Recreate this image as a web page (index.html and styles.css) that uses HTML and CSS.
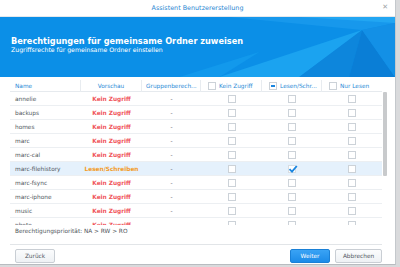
FILE: index.html
```html
<!DOCTYPE html>
<html>
<head>
  <title>Assistent Benutzererstellung</title>
  <link rel="stylesheet" href="styles.css">
</head>

<body>
  <div class="window">
    <div class="titlebar">
      <span class="title">Assistent Benutzererstellung</span>
      <span class="close">&#x2715;</span>
    </div>

    <div class="banner">
      <svg class="banner-art" viewBox="0 0 396 60" preserveAspectRatio="none">
        <rect width="396" height="60" fill="#0b8fe7"/>
        <polygon points="230,0 396,0 396,6 363,13" fill="#1798ec"/>
        <polygon points="300,0 396,0 396,6" fill="#22a6f2"/>
        <polygon points="363,13 220,60 300,60" fill="#1ba3f0"/>
        <polygon points="363,13 300,60 350,60" fill="#0d86dc"/>
        <polygon points="363,13 350,60 396,60" fill="#0a7ed6"/>
        <polygon points="363,13 396,6 396,60" fill="#1390e6"/>
        <polygon points="180,60 260,35 220,60" fill="#1299ec"/>
      </svg>
      <h1 class="banner-title">Berechtigungen für gemeinsame Ordner zuweisen</h1>
      <p class="banner-sub">Zugriffsrechte für gemeinsame Ordner einstellen</p>
    </div>

    <div class="grid-area">
      <div class="grid-head">
        <div class="col col-name">Name</div>
        <div class="col col-preview">Vorschau</div>
        <div class="col col-group">Gruppenberech...</div>
        <div class="col col-perm"><span class="box"></span>Kein Zugriff</div>
        <div class="col col-perm"><span class="box box-mixed"></span>Lesen/Schr...</div>
        <div class="col col-perm last"><span class="box"></span>Nur Lesen</div>
      </div>

      <div class="grid-body">
        <div class="rows">
          <div class="row"><div class="cell col-name">annelie</div><div class="cell col-preview deny">Kein Zugriff</div><div class="cell col-group">-</div><div class="cell col-perm"><span class="box"></span></div><div class="cell col-perm"><span class="box"></span></div><div class="cell col-perm"><span class="box"></span></div></div>
          <div class="row"><div class="cell col-name">backups</div><div class="cell col-preview deny">Kein Zugriff</div><div class="cell col-group">-</div><div class="cell col-perm"><span class="box"></span></div><div class="cell col-perm"><span class="box"></span></div><div class="cell col-perm"><span class="box"></span></div></div>
          <div class="row"><div class="cell col-name">homes</div><div class="cell col-preview deny">Kein Zugriff</div><div class="cell col-group">-</div><div class="cell col-perm"><span class="box"></span></div><div class="cell col-perm"><span class="box"></span></div><div class="cell col-perm"><span class="box"></span></div></div>
          <div class="row"><div class="cell col-name">marc</div><div class="cell col-preview deny">Kein Zugriff</div><div class="cell col-group">-</div><div class="cell col-perm"><span class="box"></span></div><div class="cell col-perm"><span class="box"></span></div><div class="cell col-perm"><span class="box"></span></div></div>
          <div class="row"><div class="cell col-name">marc-cal</div><div class="cell col-preview deny">Kein Zugriff</div><div class="cell col-group">-</div><div class="cell col-perm"><span class="box"></span></div><div class="cell col-perm"><span class="box"></span></div><div class="cell col-perm"><span class="box"></span></div></div>
          <div class="row selected"><div class="cell col-name">marc-filehistory</div><div class="cell col-preview rw">Lesen/Schreiben</div><div class="cell col-group">-</div><div class="cell col-perm"><span class="box"></span></div><div class="cell col-perm"><span class="box box-checked"><svg viewBox="0 0 10 10"><path d="M1.5 5.2 L4 7.6 L8.8 2" fill="none" stroke="#1a86e0" stroke-width="1.8"/></svg></span></div><div class="cell col-perm"><span class="box"></span></div></div>
          <div class="row"><div class="cell col-name">marc-fsync</div><div class="cell col-preview deny">Kein Zugriff</div><div class="cell col-group">-</div><div class="cell col-perm"><span class="box"></span></div><div class="cell col-perm"><span class="box"></span></div><div class="cell col-perm"><span class="box"></span></div></div>
          <div class="row"><div class="cell col-name">marc-iphone</div><div class="cell col-preview deny">Kein Zugriff</div><div class="cell col-group">-</div><div class="cell col-perm"><span class="box"></span></div><div class="cell col-perm"><span class="box"></span></div><div class="cell col-perm"><span class="box"></span></div></div>
          <div class="row"><div class="cell col-name">music</div><div class="cell col-preview deny">Kein Zugriff</div><div class="cell col-group">-</div><div class="cell col-perm"><span class="box"></span></div><div class="cell col-perm"><span class="box"></span></div><div class="cell col-perm"><span class="box"></span></div></div>
          <div class="row hover"><div class="cell col-name">photo</div><div class="cell col-preview deny">Kein Zugriff</div><div class="cell col-group">-</div><div class="cell col-perm"><span class="box"></span></div><div class="cell col-perm"><span class="box"></span></div><div class="cell col-perm"><span class="box"></span></div></div>
        </div>
        <div class="scrollbar"><div class="thumb"></div></div>
      </div>
    </div>

    <p class="priority">Berechtigungspriorität: NA &gt; RW &gt; RO</p>

    <div class="footer">
      <button class="btn">Zurück</button>
      <div class="spacer"></div>
      <button class="btn btn-primary">Weiter</button>
      <button class="btn">Abbrechen</button>
    </div>
  </div>
</body>
</html>
```

FILE: styles.css
```css
body {
  margin: 0;
  background-color: #d9dadc;
  font-family: "DejaVu Sans", Verdana, sans-serif;
  width: 400px;
  height: 267px;
  overflow: hidden;
}

.window {
  width: 396px;
  height: 265px;
  background-color: #fff;
  border-right: 1px solid #c4c8cc;
  border-bottom: 1px solid #b8bcc0;
  box-sizing: border-box;
  display: flex;
  flex-direction: column;
}

.titlebar {
  height: 17px;
  display: flex;
  align-items: center;
  justify-content: center;
  position: relative;
  border-bottom: 1px solid #e4e8ec;
  box-sizing: border-box;
}

.title {
  font-size: 6.4px;
  color: #2a86d2;
}

.close {
  position: absolute;
  right: 7px;
  top: 3px;
  font-size: 7px;
  color: #a0a4a8;
}

.banner {
  height: 60px;
  position: relative;
  padding-left: 11px;
  box-sizing: border-box;
  padding-top: 19px;
  overflow: hidden;
}

.banner-art {
  position: absolute;
  left: 0;
  top: 0;
  width: 100%;
  height: 100%;
}

.banner-title {
  position: relative;
  margin: 0;
  font-size: 8.2px;
  line-height: 10px;
  font-weight: bold;
  color: #fff;
}

.banner-sub {
  position: relative;
  margin: 0;
  font-size: 6.2px;
  line-height: 8px;
  color: #fff;
}

.grid-area {
  margin: 3px 0 0 10px;
}

.grid-head {
  display: flex;
  height: 12px;
  width: 372px;
  align-items: center;
  border-bottom: 1px solid #e6eaee;
  box-sizing: border-box;
  font-size: 5.8px;
  color: #2a8ad6;
}

.grid-head .col {
  height: 12px;
  display: flex;
  align-items: center;
  border-right: 1px solid #e8ecf0;
  box-sizing: border-box;
  white-space: nowrap;
  overflow: hidden;
}

.grid-head .col.last {
  border-right: none;
}

.col-name { width: 71px; padding-left: 5px; }
.col-preview { width: 61px; justify-content: center; }
.col-group { width: 59px; justify-content: center; }
.col-perm { width: 60px; justify-content: center; }

.grid-head .col-group {
  justify-content: flex-start;
  padding-left: 4px;
}

.grid-head .col-perm {
  justify-content: flex-start;
  padding-left: 7px;
  gap: 3px;
}

.grid-head .col-perm:nth-child(4) { width: 61px; }

.grid-body {
  display: flex;
  height: 133px;
  overflow: hidden;
}

.rows {
  width: 372px;
}

.row {
  display: flex;
  height: 14px;
  align-items: center;
  border-bottom: 1px solid #eceff2;
  box-sizing: border-box;
  font-size: 5.8px;
  color: #50565c;
}

.row .col-perm:nth-child(4) { width: 61px; }

.row.selected {
  background-color: #e5f1fc;
}

.cell {
  display: flex;
  align-items: center;
  height: 100%;
  box-sizing: border-box;
  white-space: nowrap;
}

.deny {
  color: #f0555a;
  font-weight: bold;
}

.rw {
  color: #f39a25;
  font-weight: bold;
}

.box {
  display: inline-block;
  width: 8px;
  height: 8px;
  border: 1px solid #ccd2d8;
  background: #fff;
  box-sizing: border-box;
  position: relative;
}

.box-mixed::after {
  content: '';
  position: absolute;
  left: 1px;
  right: 1px;
  top: 2.5px;
  height: 2px;
  background: #1a86e0;
}

.box-checked {
  border-color: #d8dde2;
}

.box-checked svg {
  position: absolute;
  left: -1px;
  top: -2px;
  width: 10px;
  height: 10px;
}

.scrollbar {
  width: 4px;
  margin-left: 1px;
  height: 133px;
}

.thumb {
  height: 84px;
  background: #c8cacc;
  border-radius: 1px;
}

.priority {
  margin: 2px 0 0 15px;
  font-size: 5.8px;
  line-height: 8px;
  color: #50565c;
}

.footer {
  margin: 9px 13px 0 10px;
  border-top: 1px solid #e2e5e8;
  padding: 4px 0 0 5px;
  display: flex;
  gap: 5px;
}

.spacer {
  flex: 1;
}

.btn {
  height: 14px;
  padding: 0;
  width: 40px;
  font-family: "DejaVu Sans", Verdana, sans-serif;
  font-size: 5.8px;
  color: #50565c;
  background: linear-gradient(#fbfcfd, #eef1f4);
  border: 1px solid #c9ced4;
  border-radius: 2px;
}

.btn:last-child {
  width: 47px;
}

.btn-primary {
  color: #fff;
  background: linear-gradient(#3aa3f5, #1c8be8);
  border-color: #1a80d6;
}
```
